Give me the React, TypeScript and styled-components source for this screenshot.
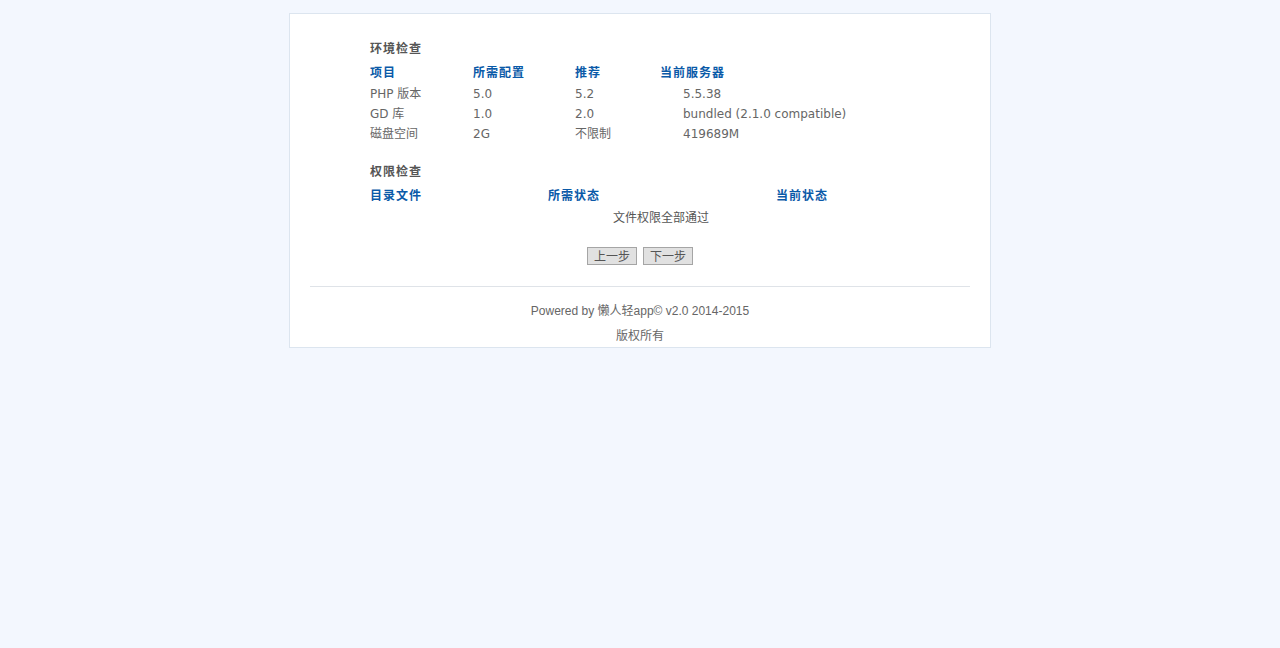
import styled, { createGlobalStyle } from 'styled-components';

const GlobalStyle = createGlobalStyle`
  html, body {
    margin: 0;
    padding: 0;
    background: #f3f7fe;
  }
  body {
    font-family: 'DejaVu Sans', Verdana, 'Noto Sans CJK SC', sans-serif;
    font-size: 12px;
    color: #666;
  }
`;

const envRows = [
  ['PHP 版本', '5.0', '5.2', '5.5.38'],
  ['GD 库', '1.0', '2.0', 'bundled (2.1.0 compatible)'],
  ['磁盘空间', '2G', '不限制', '419689M'],
];

export default function App() {
  return (
    <>
      <GlobalStyle />
      <UICard>
        <UIContent>
          <UISectionTitle>环境检查</UISectionTitle>
          <UIEnvGrid>
            <UIHead>项目</UIHead>
            <UIHead>所需配置</UIHead>
            <UIHead>推荐</UIHead>
            <UIHead>当前服务器</UIHead>
            {envRows.map((row) =>
              row.map((cell, i) => (
                <UICell key={row[0] + i} $indent={i === 3}>
                  {cell}
                </UICell>
              ))
            )}
          </UIEnvGrid>

          <UISectionTitle $spaced>权限检查</UISectionTitle>
          <UIPermGrid>
            <UIHead>目录文件</UIHead>
            <UIHead>所需状态</UIHead>
            <UIHead>当前状态</UIHead>
            <UIMessage>文件权限全部通过</UIMessage>
          </UIPermGrid>
        </UIContent>

        <UIActions>
          <UIButton type="button">上一步</UIButton>
          <UIButton type="button">下一步</UIButton>
        </UIActions>

        <UIFooter>
          <UIFooterLine>Powered by 懒人轻app© v2.0 2014-2015</UIFooterLine>
          <UIFooterLine>版权所有</UIFooterLine>
        </UIFooter>
      </UICard>
    </>
  );
}

const UICard = styled.div`
  width: 700px;
  margin: 13px auto 0;
  background: #fff;
  border: 1px solid #dce5ef;
`;

const UIContent = styled.div`
  padding: 24px 80px 0;
`;

const UISectionTitle = styled.div<{ $spaced?: boolean }>`
  font-family: 'Noto Sans CJK SC', sans-serif;
  font-weight: bold;
  font-size: 12px;
  line-height: 20px;
  letter-spacing: 1px;
  color: #555;
  margin-top: ${(p) => (p.$spaced ? '17px' : '0')};
  margin-bottom: 4px;
`;

const UIEnvGrid = styled.div`
  display: grid;
  grid-template-columns: 103px 102px 85px 1fr;
  grid-template-rows: 22px;
  grid-auto-rows: 20px;
  align-items: center;
`;

const UIPermGrid = styled.div`
  display: grid;
  width: 582px;
  grid-template-columns: 178px 228px 1fr;
  grid-template-rows: 22px 20px;
  align-items: center;
`;

const UIHead = styled.div`
  align-self: start;
  font-family: 'Noto Sans CJK SC', sans-serif;
  font-weight: bold;
  letter-spacing: 1px;
  color: #0a5aa8;
  line-height: 20px;
`;

const UICell = styled.div<{ $indent?: boolean }>`
  line-height: 20px;
  color: #666;
  padding-left: ${(p) => (p.$indent ? '23px' : '0')};
  white-space: nowrap;
`;

const UIMessage = styled.div`
  grid-column: 1 / -1;
  text-align: center;
  line-height: 20px;
  color: #555;
  font-family: 'Noto Sans CJK SC', sans-serif;
`;

const UIActions = styled.div`
  display: flex;
  justify-content: center;
  gap: 6px;
  padding-top: 20px;
  padding-bottom: 21px;
  border-bottom: 1px solid #dfe3e8;
  margin: 0 20px;
`;

const UIButton = styled.button`
  width: 50px;
  height: 18px;
  padding: 0;
  border: 1px solid #a5a5a5;
  background: #e1e1e1;
  color: #555;
  font-family: 'Noto Sans CJK SC', sans-serif;
  font-size: 12px;
  line-height: 16px;
`;

const UIFooter = styled.div`
  display: flex;
  flex-direction: column;
  align-items: center;
  gap: 5px;
  padding: 14px 0 1px;
`;

const UIFooterLine = styled.div`
  font-family: 'Liberation Sans', 'Noto Sans CJK SC', sans-serif;
  font-size: 12px;
  line-height: 20px;
  color: #666;
`;
